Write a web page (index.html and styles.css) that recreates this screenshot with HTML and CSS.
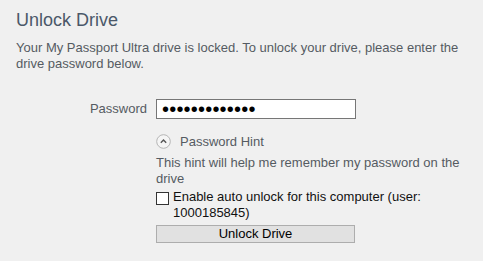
FILE: index.html
```html
<!DOCTYPE html>
<html>
<head>
<meta charset="utf-8">
<link rel="stylesheet" href="styles.css">
</head>
<body>
<div class="page">
  <h1 class="title">Unlock Drive</h1>
  <p class="desc">Your My Passport Ultra drive is locked. To unlock your drive, please enter the drive password below.</p>
  <div class="form">
    <label class="label" for="pw">Password</label>
    <div class="field"><input id="pw" class="input" type="password" value="1234567890123"></div>
    <div class="spacer"></div>
    <div class="col">
      <div class="hint">
        <svg class="hint-icon" width="15" height="15" viewBox="0 0 15 15">
          <circle cx="7.5" cy="7.5" r="6.8" fill="#f5f5f5" stroke="#b5b5b5" stroke-width="1"/>
          <path d="M4.8 8.8 L7.5 6.1 L10.2 8.8" fill="none" stroke="#555" stroke-width="1.4"/>
        </svg>
        <span>Password Hint</span>
      </div>
      <div class="hint-text">This hint will help me remember my password on the drive</div>
      <label class="check">
        <span class="box"></span>
        <span class="check-text">Enable auto unlock for this computer (user: 1000185845)</span>
      </label>
      <button class="btn">Unlock Drive</button>
    </div>
  </div>
</div>
</body>
</html>
```
FILE: styles.css
```css
html, body {
  margin: 0;
  padding: 0;
  background: #f0f0f0;
}
body {
  font-family: "Liberation Sans", Arial, sans-serif;
}
.page {
  padding: 8px 0 0 16px;
  width: 456px;
}
.title {
  margin: 0;
  font-size: 18px;
  font-weight: normal;
  line-height: 24px;
  color: #4b5869;
}
.desc {
  margin: 8px 0 0 0;
  font-size: 13px;
  line-height: 16px;
  color: #555b62;
}
.form {
  margin-top: 27px;
  display: grid;
  grid-template-columns: 131px 1fr;
  column-gap: 9px;
}
.label {
  text-align: right;
  font-size: 13px;
  line-height: 20px;
  color: #555b62;
}
.input {
  display: block;
  box-sizing: border-box;
  width: 200px;
  height: 20px;
  margin: 0;
  border: 1px solid #767676;
  background: #fff;
  padding: 0 0 0 5px;
  font-size: 20px;
  font-family: "Liberation Sans", Arial, sans-serif;
  letter-spacing: 0.2px;
  color: #000;
  outline: none;
}
.col {
  display: flex;
  flex-direction: column;
  align-items: flex-start;
}
.hint {
  margin-top: 15px;
  display: flex;
  align-items: center;
  gap: 9px;
  font-size: 13px;
  line-height: 15px;
  color: #555b62;
}
.hint-icon {
  display: block;
}
.hint-text {
  margin-top: 6px;
  font-size: 13px;
  line-height: 16px;
  color: #555b62;
}
.check {
  margin-top: 2px;
  display: flex;
  align-items: flex-start;
  gap: 4px;
  font-size: 13px;
  line-height: 16px;
  color: #111;
}
.box {
  flex: none;
  box-sizing: border-box;
  width: 13px;
  height: 13px;
  margin-top: 3px;
  border: 1px solid #333;
  background: #fff;
}
.btn {
  display: block;
  margin-top: 4px;
  box-sizing: border-box;
  width: 199px;
  height: 18px;
  padding: 0;
  border: 1px solid #adadad;
  background: #e1e1e1;
  font-family: "Liberation Sans", Arial, sans-serif;
  font-size: 13px;
  line-height: 16px;
  color: #000;
}
```
